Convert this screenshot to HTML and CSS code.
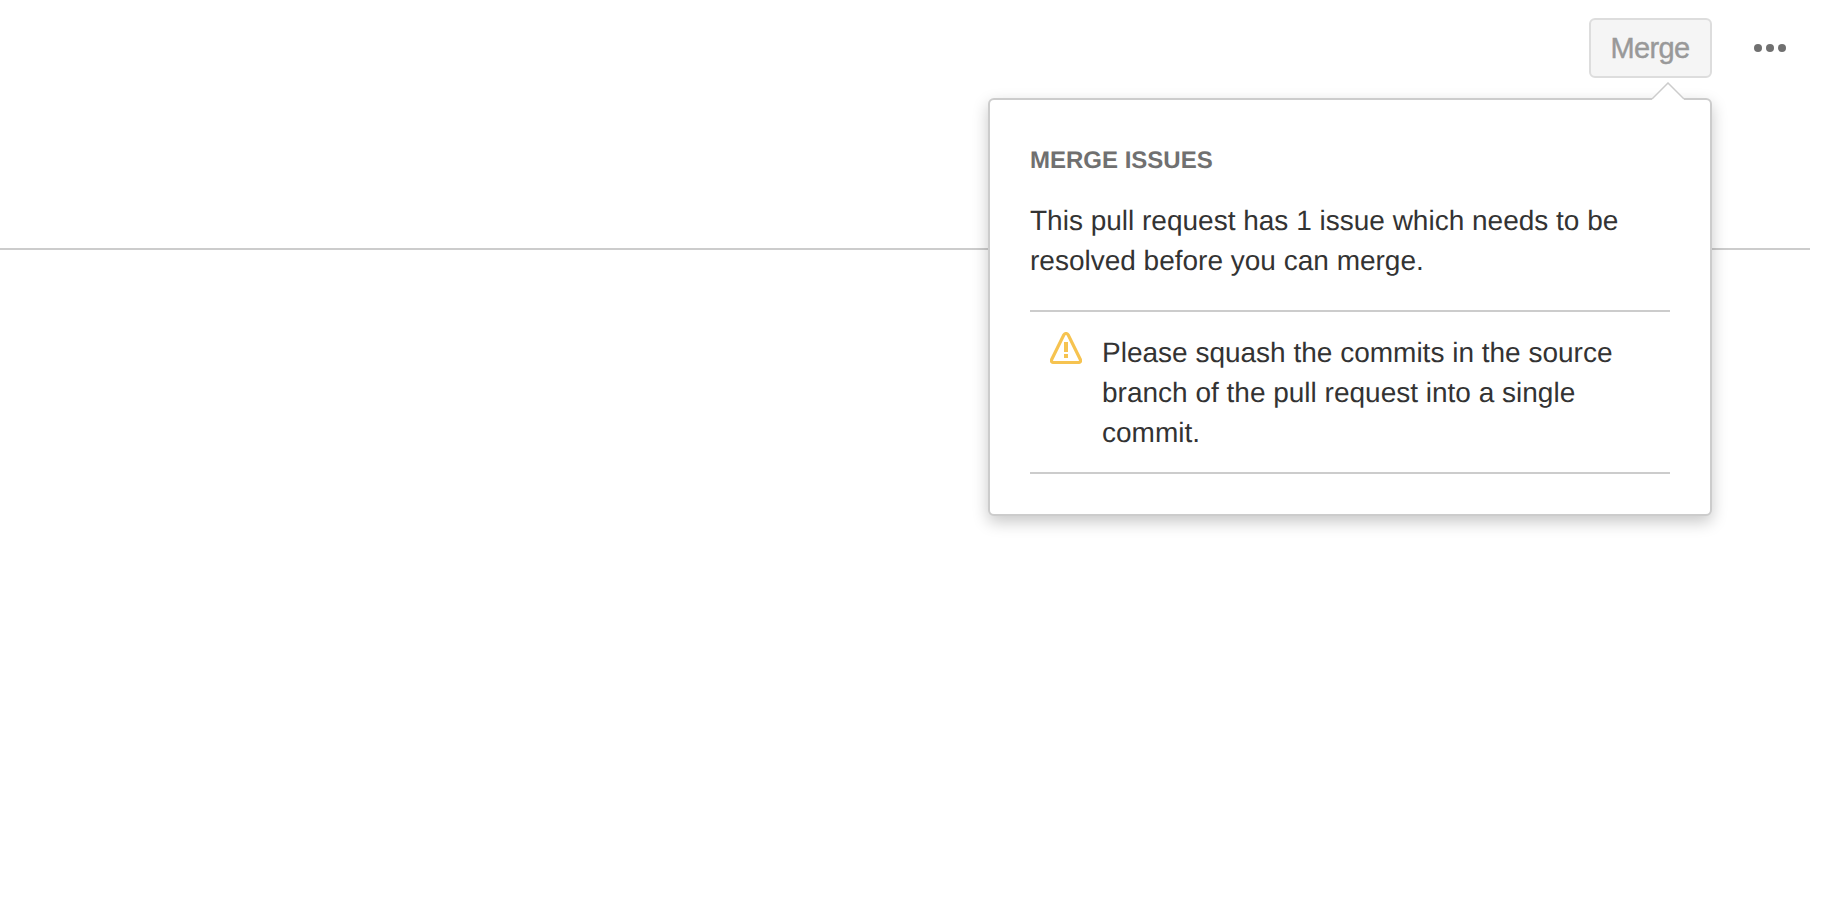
FILE: index.html
```html
<!DOCTYPE html>
<html lang="en">
<head>
<meta charset="utf-8">
<title>Pull request</title>
<link rel="stylesheet" href="styles.css">
</head>
<body>
<header class="toolbar">
  <div class="merge">
    <button class="merge-button" type="button" disabled>Merge</button>
    <section class="dialog">
      <svg class="dialog-arrow" width="32" height="19" viewBox="0 0 32 19"><path class="arrow-fill" d="M0 19V17L16 1L32 17V19Z"/><path class="arrow-line" d="M0 17L16 1L32 17"/></svg>
      <h2 class="dialog-title">Merge issues</h2>
      <p class="dialog-text">This pull request has 1 issue which needs to be resolved before you can merge.</p>
      <ul class="issues">
        <li class="issue">
          <svg class="issue-icon" width="32" height="32" viewBox="0 0 32 32"><path class="icon-line" d="M13.600 3.200Q16 -.2 18.400 3.200L30.200 27.200Q31.600 30.500 28 30.500H4Q.4 30.500 1.800 27.200Z"/><path class="icon-mark" d="M14 10h4v10h-4zM14 22h4v4h-4z"/></svg>
          <span>Please squash the commits in the source branch of the pull request into a single commit.</span>
        </li>
      </ul>
    </section>
  </div>
  <button class="more" type="button" aria-label="More actions"><svg width="32" height="8" viewBox="0 0 32 8"><circle cx="4" cy="4" r="4"/><circle cx="16" cy="4" r="4"/><circle cx="28" cy="4" r="4"/></svg></button>
</header>
</body>
</html>
```

FILE: styles.css
```css
* {
  box-sizing: border-box;
}

body {
  margin: 0;
  min-height: 900px;
  background: #fff;
  color: #333;
  font: 28px/40px "Liberation Sans", Arial, sans-serif;
  text-rendering: geometricPrecision;
}

.toolbar {
  display: flex;
  justify-content: flex-end;
  align-items: flex-start;
  gap: 42px;
  height: 250px;
  margin-right: 30px;
  padding: 18px 24px 0 0;
  border-bottom: 2px solid #ccc;
}

.merge {
  position: relative;
}

.merge-button {
  display: block;
  width: 123px;
  height: 60px;
  padding: 0 1px 0 0;
  border: 2px solid #ddd;
  border-radius: 6px;
  background: #f5f5f5;
  color: #999;
  font: inherit;
  font-size: 29px;
  letter-spacing: -0.6px;
  -webkit-text-stroke: 0.4px #999;
}

.more {
  display: flex;
  align-items: center;
  height: 60px;
  padding: 0;
  border: 0;
  background: none;
  fill: #707070;
}

.dialog {
  position: absolute;
  top: 80px;
  right: 0;
  width: 724px;
  height: 418px;
  padding: 41px 40px 40px;
  border: 2px solid #ccc;
  border-radius: 6px;
  background: #fff;
  box-shadow: 0 6px 16px rgba(0, 0, 0, 0.22);
}

.dialog-arrow {
  position: absolute;
  top: -18px;
  right: 26px;
}

.arrow-fill {
  fill: #fff;
}

.arrow-line {
  fill: none;
  stroke: #ccc;
  stroke-width: 1.500;
}

.dialog-title {
  margin: 0 0 20px;
  color: #707070;
  font-size: 24px;
  text-transform: uppercase;
}

.dialog-text {
  margin: 0 0 29px;
}

.issues {
  margin: 0;
  padding: 0;
  list-style: none;
}

.issue {
  display: flex;
  gap: 20px;
  padding: 21px 40px 19px 20px;
  border: solid #ccc;
  border-width: 2px 0;
}

.issue-icon {
  flex: none;
  margin-top: -1px;
}

.icon-line {
  fill: none;
  stroke: #f6c350;
  stroke-width: 3.200;
}

.icon-mark {
  fill: #f6c350;
}
```
